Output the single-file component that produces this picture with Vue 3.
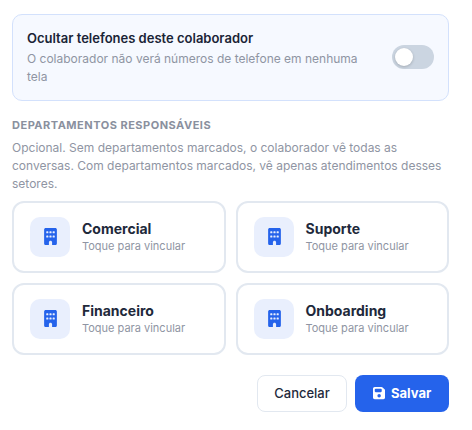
<script setup>
import { ref } from 'vue'

const hidePhones = ref(false)
const departments = ['Comercial', 'Suporte', 'Financeiro', 'Onboarding']
</script>

<template>
  <main class="form">
    <section class="privacy">
      <div class="privacy-text">
        <div class="privacy-title">Ocultar telefones deste colaborador</div>
        <div class="privacy-desc">O colaborador não verá números de telefone em nenhuma tela</div>
      </div>
      <button
        type="button"
        class="switch"
        :class="{ on: hidePhones }"
        role="switch"
        :aria-checked="hidePhones"
        @click="hidePhones = !hidePhones"
      >
        <span class="knob"></span>
      </button>
    </section>

    <h2 class="heading">Departamentos responsáveis</h2>
    <p class="hint">
      Opcional. Sem departamentos marcados, o colaborador vê todas as conversas. Com departamentos marcados, vê apenas
      atendimentos desses setores.
    </p>

    <div class="grid">
      <div v-for="name in departments" :key="name" class="dept">
        <span class="dept-icon">
          <svg viewBox="0 0 384 512" class="building">
            <path
              fill-rule="evenodd"
              d="M48 0C21.5 0 0 21.5 0 48V464c0 26.5 21.5 48 48 48h96V432c0-26.5 21.5-48 48-48s48 21.5 48 48v80h96c26.5 0 48-21.5 48-48V48c0-26.5-21.5-48-48-48H48zM80 224h32a16 16 0 0 1 16 16v32a16 16 0 0 1-16 16H80a16 16 0 0 1-16-16V240a16 16 0 0 1 16-16zM176 224h32a16 16 0 0 1 16 16v32a16 16 0 0 1-16 16H176a16 16 0 0 1-16-16V240a16 16 0 0 1 16-16zM272 224h32a16 16 0 0 1 16 16v32a16 16 0 0 1-16 16H272a16 16 0 0 1-16-16V240a16 16 0 0 1 16-16zM80 96h32a16 16 0 0 1 16 16v32a16 16 0 0 1-16 16H80a16 16 0 0 1-16-16V112a16 16 0 0 1 16-16zM176 96h32a16 16 0 0 1 16 16v32a16 16 0 0 1-16 16H176a16 16 0 0 1-16-16V112a16 16 0 0 1 16-16zM272 96h32a16 16 0 0 1 16 16v32a16 16 0 0 1-16 16H272a16 16 0 0 1-16-16V112a16 16 0 0 1 16-16z"
            />
          </svg>
        </span>
        <div>
          <div class="dept-name">{{ name }}</div>
          <div class="dept-sub">Toque para vincular</div>
        </div>
      </div>
    </div>

    <footer class="actions">
      <button type="button" class="btn cancel">Cancelar</button>
      <button type="button" class="btn save">
        <svg viewBox="0 0 448 512" class="disk">
          <path
            fill-rule="evenodd"
            d="M64 32C28.7 32 0 60.7 0 96V416c0 35.3 28.7 64 64 64H384c35.3 0 64-28.7 64-64V173.3c0-17-6.7-33.3-18.7-45.3L352 50.7C340 38.7 323.7 32 306.7 32H64zm0 96c0-17.7 14.3-32 32-32H288c17.7 0 32 14.3 32 32v64c0 17.7-14.3 32-32 32H96c-17.7 0-32-14.3-32-32V128zM224 288a64 64 0 1 1 0 128 64 64 0 1 1 0-128z"
          />
        </svg>
        Salvar
      </button>
    </footer>
  </main>
</template>

<style>
body {
  background: #fff;
}
</style>

<style scoped>
.form {
  box-sizing: border-box;
  width: 472px;
  padding: 14px 23px 18px 12px;
  font-family: Inter, "Liberation Sans", sans-serif;
  color: #1e293b;
}
.privacy {
  box-sizing: border-box;
  height: 87px;
  display: flex;
  align-items: center;
  gap: 12px;
  padding: 0 14px;
  border: 1px solid #d3e1fc;
  border-radius: 10px;
  background: #f6f9ff;
}
.privacy-text {
  flex: 1;
}
.privacy-title {
  font-size: 13px;
  line-height: 19px;
  font-weight: 600;
  color: #1a2436;
}
.privacy-desc {
  margin-top: 2px;
  font-size: 12px;
  line-height: 18px;
  color: #8f95a3;
}
.switch {
  flex: none;
  width: 42px;
  height: 24px;
  margin: 0 0 1px;
  padding: 3px;
  border: 0;
  border-radius: 12px;
  background: #cbd5e1;
}
.knob {
  display: block;
  width: 18px;
  height: 18px;
  border-radius: 50%;
  background: #fff;
  box-shadow: 0 1px 3px rgba(0, 0, 0, 0.2);
}
.switch.on {
  background: #2563eb;
}
.switch.on .knob {
  margin-left: 18px;
}
.heading {
  margin: 16px 0 0;
  font-size: 11px;
  line-height: 17px;
  font-weight: 700;
  letter-spacing: 0.5px;
  text-transform: uppercase;
  color: #8a909e;
}
.hint {
  margin: 5px 0 8px;
  font-size: 12px;
  line-height: 18px;
  color: #8f95a3;
}
.grid {
  display: grid;
  grid-template-columns: 1fr 1fr;
  gap: 10px;
}
.dept {
  box-sizing: border-box;
  height: 72px;
  display: flex;
  align-items: center;
  gap: 12px;
  padding: 0 16px;
  border: 2px solid #e2e8f0;
  border-radius: 12px;
  background: #fff;
}
.dept-icon {
  flex: none;
  display: flex;
  align-items: center;
  justify-content: center;
  width: 40px;
  height: 40px;
  border-radius: 10px;
  background: #e9effd;
}
.building {
  width: 13px;
  height: 17px;
  margin: 0 0 1px 1px;
  fill: #2563eb;
}
.dept-name {
  font-size: 14px;
  line-height: 18px;
  font-weight: 700;
}
.dept-sub {
  font-size: 11px;
  line-height: 17px;
  color: #8f95a3;
}
.actions {
  display: flex;
  justify-content: flex-end;
  gap: 8px;
  margin-top: 20px;
}
.btn {
  box-sizing: border-box;
  height: 37px;
  display: flex;
  align-items: center;
  justify-content: center;
  gap: 6px;
  padding: 0 0 1px;
  border-radius: 8px;
  font-family: inherit;
  font-size: 13px;
}
.cancel {
  width: 90px;
  border: 1px solid #e2e8f0;
  background: #fff;
  color: #1e293b;
  font-weight: 500;
}
.save {
  width: 94px;
  border: 0;
  background: #2563eb;
  color: #fff;
  font-weight: 700;
}
.disk {
  width: 12.25px;
  height: 14px;
  fill: #fff;
}
</style>
